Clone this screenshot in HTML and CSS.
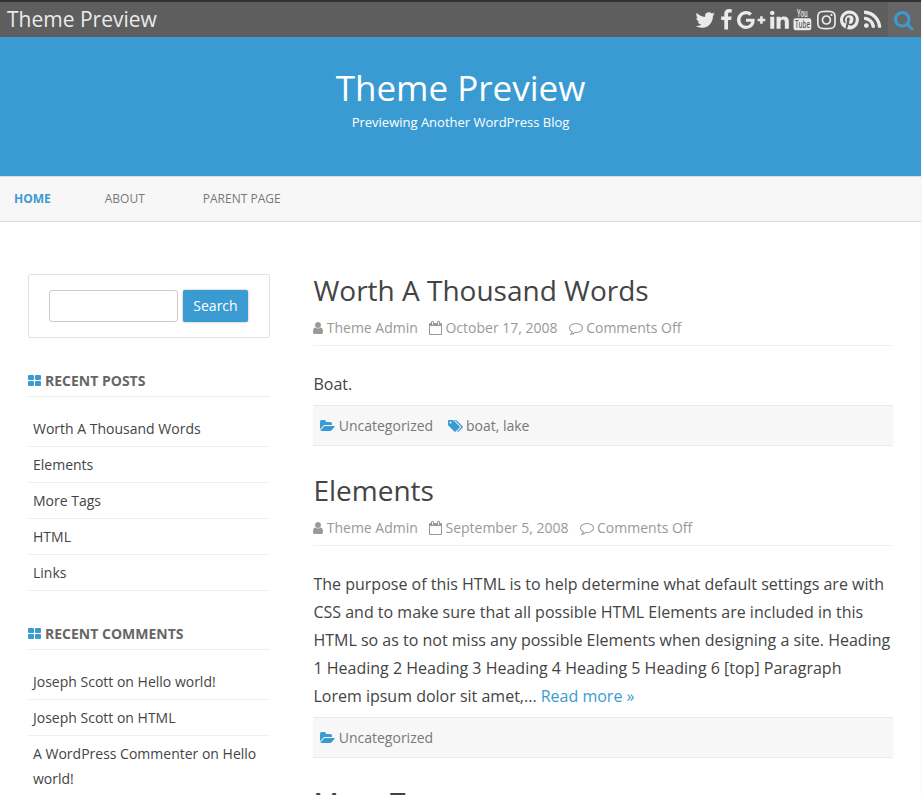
FILE: index.html
```html
<!DOCTYPE html>
<html lang="en">
<head>
<meta charset="utf-8">
<title>Theme Preview</title>
<link rel="stylesheet" href="styles.css">
</head>
<body>
<svg class="sprite" aria-hidden="true">
  <symbol id="user" viewBox="256 0 1280 1792"><path d="M1536 1399q0 109-62.5 187t-150.5 78h-854q-88 0-150.5-78t-62.5-187q0-85 8.5-160.5t31.5-152 58.5-131 94-89 134.5-34.5q131 128 313 128t313-128q76 0 134.5 34.5t94 89 58.5 131 31.5 152 8.5 160.5zm-256-887q0 159-112.5 271.5t-271.5 112.5-271.5-112.5-112.5-271.5 112.5-271.5 271.5-112.5 271.5 112.5 112.5 271.5z"/></symbol>
  <symbol id="calendar" viewBox="64 0 1664 1792"><path d="M192 1664h1408v-1024h-1408v1024zm384-1216v-288q0-14-9-23t-23-9h-64q-14 0-23 9t-9 23v288q0 14 9 23t23 9h64q14 0 23-9t9-23zm768 0v-288q0-14-9-23t-23-9h-64q-14 0-23 9t-9 23v288q0 14 9 23t23 9h64q14 0 23-9t9-23zm384-64v1280q0 52-38 90t-90 38h-1408q-52 0-90-38t-38-90v-1280q0-52 38-90t90-38h128v-96q0-66 47-113t113-47h64q66 0 113 47t47 113v96h384v-96q0-66 47-113t113-47h64q66 0 113 47t47 113v96h128q52 0 90 38t38 90z"/></symbol>
  <symbol id="comment" viewBox="0 0 1792 1792"><path d="M896 384q-204 0-381.5 69.5t-282 187.5-104.5 255q0 112 71.5 213.5t201.5 175.5l87 50-27 96q-24 91-70 172 152-63 275-171l43-38 57 6q69 8 130 8 204 0 381.5-69.5t282-187.5 104.5-255-104.5-255-282-187.5-381.5-69.5zm896 512q0 174-120 321.5t-326 233-450 85.5q-70 0-145-8-198 175-460 242-49 14-114 22h-5q-15 0-27-10.5t-16-27.5v-1q-3-4-.5-12t2-10 4.5-9.5l6-9 7-8.5 8-9q7-8 31-34.5t34.5-38 31-39.5 32.5-51 27-59 26-76q-157-89-247.5-220t-90.5-281q0-174 120-321.5t326-233 450-85.5 450 85.5 326 233 120 321.5z"/></symbol>
  <symbol id="folder" viewBox="-64 0 1920 1792"><path d="M1815 952q0 31-31 66l-336 396q-43 51-120.5 86.5t-143.5 35.5h-1088q-34 0-60.5-13t-26.5-43q0-31 31-66l336-396q43-51 120.5-86.5t143.5-35.5h1088q34 0 60.5 13t26.5 43zm-343-344v160h-832q-94 0-197 47.5t-164 119.5l-337 396-5 6q0-4-.5-12.5t-.5-12.5v-960q0-92 66-158t158-66h320q92 0 158 66t66 158v32h544q92 0 158 66t66 158z"/></symbol>
  <symbol id="tags" viewBox="128 0 1920 1792"><path d="M576 448q0-53-37.5-90.5t-90.5-37.5-90.5 37.5-37.5 90.5 37.5 90.5 90.5 37.5 90.5-37.5 37.5-90.5zm1067 576q0 53-37 90l-491 492q-39 37-91 37-53 0-90-37l-715-716q-38-37-64.5-101t-26.5-117v-416q0-52 38-90t90-38h416q53 0 117 26.5t102 64.5l715 714q37 39 37 91zm384 0q0 53-37 90l-491 492q-39 37-91 37-36 0-59-14t-53-45l470-470q37-37 37-90 0-52-37-91l-715-714q-38-38-102-64.5t-117-26.5h224q53 0 117 26.5t102 64.5l715 714q37 39 37 91z"/></symbol>
  <symbol id="grid" viewBox="64 0 1664 1792"><rect x="64" y="256" width="768" height="640" rx="128"/><rect x="960" y="256" width="768" height="640" rx="128"/><rect x="64" y="1024" width="768" height="640" rx="128"/><rect x="960" y="1024" width="768" height="640" rx="128"/></symbol>
</svg>

<div class="topbar">
  <div class="topbar-name">Theme Preview</div>
  <div class="social">
    <svg class="s-twitter" viewBox="64 0 1664 1792"><path d="M1684 408q-67 98-162 167 1 14 1 42 0 130-38 259.5t-115.5 248.5-184.5 210.5-258 146-323 54.5q-271 0-496-145 35 4 78 4 225 0 401-138-105-2-188-64.5t-114-159.5q33 5 61 5 43 0 85-11-112-23-185.5-111.5t-73.5-205.5v-4q68 38 146 41-66-44-105-115t-39-154q0-88 44-163 121 149 294.5 238.5t371.5 99.5q-8-38-8-74 0-134 94.5-228.5t228.5-94.5q140 0 236 102 109-21 205-78-37 115-142 178 93-10 186-50z"/></svg>
    <svg class="s-facebook" viewBox="384 0 1024 1792"><path d="M1343 12v264h-157q-86 0-116 36t-30 108v189h293l-39 296h-254v759h-306v-759h-255v-296h255v-218q0-186 104-288.5t277-102.5q147 0 228 12z"/></svg>
    <svg class="s-google" viewBox="0 0 2304 1792"><path d="M1437 913q0 208-87 370.5t-248 254-369 91.5q-149 0-285-58t-234-156-156-234-58-285 58-285 156-234 234-156 285-58q286 0 491 192l-199 191q-117-113-292-113-123 0-227.5 62t-165.5 168.5-61 232.5 61 232.5 165.5 168.5 227.5 62q83 0 152.5-23t114.5-57.5 78.5-78.5 49-83 21.5-74h-416v-252h692q12 63 12 122zM2304 791v210h-209v209h-210v-209h-209v-210h209v-209h210v209h209z"/></svg>
    <svg class="s-square" viewBox="128 0 1536 1792"><path d="M477 625v991h-330v-991h330zm21-306q1 73-50.5 122t-135.5 49h-2q-82 0-132-49t-50-122q0-74 51.5-122.5t134.5-48.5 133 48.5 51 122.5zm1166 729v568h-329v-530q0-105-40.5-164.5t-126.5-59.5q-63 0-105.5 34.5t-63.5 85.5q-11 30-11 81v553h-329q2-399 2-647t-1-296l-1-48h329v144h-2q20-32 41-56t56.5-52 87-43.5 114.5-15.5q171 0 275 113.5t104 332.5z"/></svg>
    <svg class="s-square" viewBox="0 0 18.86 22"><rect x="0.5" y="9.3" width="17.8" height="12" rx="2.2"/><text class="yt-you" x="4" y="7.7" textLength="10.8" lengthAdjust="spacingAndGlyphs">You</text><text class="yt-tube" x="1.9" y="19.2" textLength="15.2" lengthAdjust="spacingAndGlyphs">Tube</text></svg>
    <svg class="s-square" viewBox="128 0 1536 1792"><path d="M1152 896q0-106-75-181t-181-75-181 75-75 181 75 181 181 75 181-75 75-181zm138 0q0 164-115 279t-279 115-279-115-115-279 115-279 279-115 279 115 115 279zm108-410q0 38-27 65t-65 27-65-27-27-65 27-65 65-27 65 27 27 65zm-502-220q-7 0-76.5-.5t-105.5 0-96.5 3-103 10-71.5 18.5q-50 20-88 58t-58 88q-11 29-18.5 71.5t-10 103-3 96.5 0 105.5.5 76.5-.5 76.5 0 105.5 3 96.5 10 103 18.5 71.5q20 50 58 88t88 58q29 11 71.5 18.5t103 10 96.5 3 105.5 0 76.5-.5 76.5.5 105.5 0 96.5-3 103-10 71.5-18.5q50-20 88-58t58-88q11-29 18.5-71.5t10-103 3-96.5 0-105.5-.5-76.5.5-76.5 0-105.5-3-96.5-10-103-18.5-71.5q-20-50-58-88t-88-58q-29-11-71.5-18.5t-103-10-96.5-3-105.5 0-76.5.5zm768 630q0 229-5 317-10 208-124 322t-322 124q-88 5-317 5t-317-5q-208-10-322-124t-124-322q-5-88-5-317t5-317q10-208 124-322t322-124q88-5 317-5t317 5q208 10 322 124t124 322q5 88 5 317z"/></svg>
    <svg class="s-square" viewBox="128 0 1536 1792"><path d="M1664 896q0 209-103 385.5t-279.5 279.5-385.5 103q-111 0-218-32 59-93 78-164 9-34 54-211 20 39 73 67.5t114 28.5q121 0 216-68.5t147-188.5 52-270q0-114-59.5-214t-172.5-163-255-63q-105 0-196 29t-154.5 77-109 110.5-67 129.5-21.5 134q0 104 40 183t117 111q30 12 38-20 2-7 8-31t8-30q6-23-11-43-51-61-51-151 0-151 104.5-259.5t273.5-108.5q151 0 235.5 82t84.5 213q0 170-68.5 289t-175.5 119q-61 0-98-43.5t-23-104.5q8-35 26.5-93.5t30-103 11.5-75.5q0-50-27-83t-77-33q-62 0-105 57t-43 142q0 73 25 122l-99 418q-17 70-13 177-206-91-333-281t-127-423q0-209 103-385.5t279.5-279.5 385.5-103 385.5 103 279.5 279.5 103 385.5z"/></svg>
    <svg class="s-rss" viewBox="192 0 1408 1792"><path d="M576 1344q0 80-56 136t-136 56-136-56-56-136 56-136 136-56 136 56 56 136zm512 123q2 28-17 48-18 21-47 21h-135q-25 0-43-16.5t-20-41.5q-22-229-184.5-391.5t-391.5-184.5q-25-2-41.5-20t-16.5-43v-135q0-29 21-47 17-17 43-17h5q160 13 306 80.5t259 181.5q114 113 181.5 259t80.5 306zm512 2q2 27-18 47-18 20-46 20h-143q-26 0-44.5-17.5t-19.5-42.5q-12-215-101-408.5t-231.5-336-336-231.5-408.5-102q-25-1-42.5-19.5t-17.5-43.5v-143q0-28 20-46 18-18 44-18h3q262 13 501.5 120t425.5 294q187 186 294 425.5t120 501.5z"/></svg>
  </div>
  <div class="search-toggle"><svg viewBox="64 128 1664 1664"><path d="M1216 832q0-185-131.5-316.5t-316.5-131.5-316.5 131.5-131.5 316.5 131.5 316.5 316.5 131.5 316.5-131.5 131.5-316.5zm512 832q0 52-38 90t-90 38q-54 0-90-38l-343-342q-179 124-399 124-143 0-273.5-55.5t-225-150-150-225-55.5-273.5 55.5-273.5 150-225 225-150 273.5-55.5 273.5 55.5 225 150 150 225 55.5 273.5q0 220-124 399l343 343q37 37 37 90z"/></svg></div>
</div>

<div class="page">
  <header class="banner">
    <h1>Theme Preview</h1>
    <p>Previewing Another WordPress Blog</p>
  </header>
  <nav class="menu">
    <a class="current">Home</a>
    <a>About</a>
    <a>Parent Page</a>
  </nav>
  <div class="columns">
    <aside>
      <form class="searchbox"><input type="text" aria-label="Search"><button type="button">Search</button></form>
      <section class="widget">
        <h3><svg class="i-grid"><use href="#grid"/></svg>Recent Posts</h3>
        <ul>
          <li>Worth A Thousand Words</li>
          <li>Elements</li>
          <li>More Tags</li>
          <li>HTML</li>
          <li>Links</li>
        </ul>
      </section>
      <section class="widget">
        <h3><svg class="i-grid"><use href="#grid"/></svg>Recent Comments</h3>
        <ul>
          <li>Joseph Scott on Hello world!</li>
          <li>Joseph Scott on HTML</li>
          <li>A WordPress Commenter on Hello world!</li>
        </ul>
      </section>
    </aside>
    <main>
      <article>
        <h2>Worth A Thousand Words</h2>
        <div class="meta">
          <span><svg class="i-user"><use href="#user"/></svg>Theme Admin</span>
          <span><svg class="i-cal"><use href="#calendar"/></svg>October 17, 2008</span>
          <span><svg class="i-comment"><use href="#comment"/></svg>Comments Off</span>
        </div>
        <p class="entry">Boat.</p>
        <div class="terms">
          <span><svg><use href="#folder"/></svg>Uncategorized</span>
          <span><svg><use href="#tags"/></svg>boat, lake</span>
        </div>
      </article>
      <article>
        <h2>Elements</h2>
        <div class="meta">
          <span><svg class="i-user"><use href="#user"/></svg>Theme Admin</span>
          <span><svg class="i-cal"><use href="#calendar"/></svg>September 5, 2008</span>
          <span><svg class="i-comment"><use href="#comment"/></svg>Comments Off</span>
        </div>
        <p class="entry">The purpose of this HTML is to help determine what default settings are with CSS and to make sure that all possible HTML Elements are included in this HTML so as to not miss any possible Elements when designing a site. Heading 1 Heading 2 Heading 3 Heading 4 Heading 5 Heading 6 [top] Paragraph Lorem ipsum dolor sit amet,... <a>Read more »</a></p>
        <div class="terms">
          <span><svg><use href="#folder"/></svg>Uncategorized</span>
        </div>
      </article>
      <article>
        <h2>More Tags</h2>
      </article>
    </main>
  </div>
</div>
</body>
</html>
```

FILE: styles.css
```css
* { box-sizing: border-box; }
html { height: 100%; overflow: hidden; }
body {
  margin: 0;
  height: 795px;
  overflow: hidden;
  display: flex;
  flex-direction: column;
  background: #f7f7f7;
  color: #444;
  font-family: "Open Sans", sans-serif;
  font-size: 14px;
}
h1, h2, h3, p, ul { margin: 0; padding: 0; font-weight: 400; }
ul { list-style: none; }
svg { fill: currentColor; flex: none; display: block; }
.sprite { display: none; }

.topbar {
  flex: none;
  height: 37px;
  width: 921px;
  border-top: 2px solid #2f3336;
  background: #5e5e5e;
  display: flex;
  align-items: stretch;
  color: #eaeaea;
}
.topbar-name { flex: 1; padding-left: 7px; font-size: 21px; line-height: 34px; }
.social { display: flex; gap: 4.55px; padding: 6.5px 7.2px 0 0; }
.social svg { height: 22px; overflow: visible; }
.s-twitter { width: 20.43px; }
.s-facebook { width: 12.57px; }
.s-google { width: 28.29px; }
.s-square { width: 18.86px; }
.s-rss { width: 17.29px; }
.yt-you { font: 600 10.8px "Open Sans", sans-serif; }
.yt-tube { font: 600 11px "Open Sans", sans-serif; fill: #5e5e5e; }
.search-toggle {
  width: 33px;
  background: #666;
  color: #3a9bd3;
  display: flex;
  padding: 9px 0 0 6px;
}
.search-toggle svg { width: 19.5px; height: 19.5px; }

.page { width: 921px; flex: 1; min-height: 0; overflow: hidden; background: #fff; }
.banner {
  height: 139px;
  background: #3a9bd3;
  color: #fff;
  text-align: center;
  padding-top: 27px;
}
.banner h1 { font-size: 35px; line-height: 48px; }
.banner p { font-size: 13px; line-height: 20px; }

.menu {
  height: 46px;
  background: #f7f7f7;
  border-top: 1px solid #ddd;
  border-bottom: 1px solid #ddd;
  display: flex;
  gap: 58px;
  padding-left: 14px;
  font-size: 12px;
  line-height: 44px;
  text-transform: uppercase;
  color: #777;
}
.menu .current { color: #3a9bd3; font-weight: 700; margin-right: -4px; }

.columns { display: flex; gap: 43.45px; padding: 52px 28px 0; }
aside { width: 242px; flex: none; }
main { flex: 1; }

.searchbox {
  height: 64px;
  border: 1px solid #e1e1e1;
  border-radius: 2px;
  display: flex;
  gap: 5px;
  padding: 15px 20px;
}
.searchbox input {
  width: 129px;
  height: 32px;
  border: 1px solid #ccc;
  border-radius: 3px;
  background: #fff;
  padding: 0;
}
.searchbox button {
  width: 65px;
  height: 32px;
  border: 0;
  border-radius: 2px;
  background: #3a9bd3;
  color: #fff;
  font: 14px "Open Sans", sans-serif;
  padding: 0 0 2px;
  box-shadow: 0 0 2px rgba(0, 0, 0, .4);
}

.widget { margin-top: 33px; }
.widget h3 {
  display: flex;
  gap: 4px;
  height: 26px;
  border-bottom: 1px solid #eee;
  font-size: 14px;
  line-height: 20px;
  font-weight: 700;
  color: #666;
  text-transform: uppercase;
}
.i-grid { width: 13px; height: 14px; margin-top: 2px; color: #3a9bd3; }
.widget ul { margin-top: 14px; }
.widget li {
  border-bottom: 1px solid #f0f0f0;
  padding: 5px 5px;
  line-height: 25px;
}

h2 { font-size: 28px; line-height: 36px; margin-top: -2px; }
.meta {
  display: flex;
  gap: 11.3px;
  height: 36px;
  margin-top: 2px;
  border-bottom: 1px solid #f0f0f0;
  line-height: 36px;
  color: #999;
}
.meta span, .terms span { display: flex; gap: 3.3px; }
.meta svg { height: 14px; margin-top: 10.5px; }
.i-user { width: 10px; }
.i-cal { width: 13px; }
.i-comment { width: 14px; }
.entry { margin-top: 24px; font-size: 16px; line-height: 28px; }
.entry a { color: #3a9bd3; }
.terms {
  display: flex;
  gap: 14.5px;
  height: 41px;
  margin-top: 7px;
  padding-left: 7px;
  background: #f7f7f7;
  border: solid #eaeaea;
  border-width: 1px 0;
  line-height: 39px;
  color: #777;
}
.terms svg { width: 15px; height: 14px; margin-top: 13px; color: #3a9bd3; }
article { margin-bottom: 28px; }
```
